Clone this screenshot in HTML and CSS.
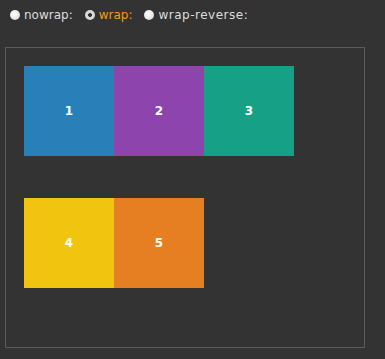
FILE: index.html
```html
<!DOCTYPE html>
<html>
<head>
<meta charset="utf-8">
<link rel="stylesheet" href="styles.css">
</head>
<body>
<div class="controls">
  <label class="opt"><span class="radio"></span><span class="lbl">nowrap:</span></label>
  <label class="opt"><span class="radio checked"></span><span class="lbl active">wrap:</span></label>
  <label class="opt"><span class="radio"></span><span class="lbl wide">wrap-reverse:</span></label>
</div>
<div class="frame">
  <div class="item c1">1</div>
  <div class="item c2">2</div>
  <div class="item c3">3</div>
  <div class="item c4">4</div>
  <div class="item c5">5</div>
</div>
</body>
</html>
```
FILE: styles.css
```css
html, body {
  margin: 0;
  padding: 0;
  background: #333333;
}
body {
  font-family: "DejaVu Sans", Verdana, sans-serif;
  font-size: 12px;
  color: #dddddd;
}
.controls {
  display: flex;
  align-items: center;
  height: 30px;
  padding-left: 10px;
  gap: 12px;
}
.opt {
  display: flex;
  align-items: center;
  gap: 4px;
}
.radio {
  width: 10px;
  height: 10px;
  border-radius: 50%;
  background: radial-gradient(circle at 40% 40%, #ffffff 0%, #e8e8e8 55%, #bdbdbd 100%);
  box-sizing: border-box;
}
.radio.checked {
  background: radial-gradient(circle, #333 0 1.6px, #d8d8d8 2.2px 100%);
}
.lbl {
  font-weight: 500;
}
.lbl.active {
  color: #f39c12;
}
.lbl.wide {
  letter-spacing: 0.5px;
}
.frame {
  margin: 17px 0 0 5px;
  width: 360px;
  height: 301px;
  box-sizing: border-box;
  border: 1px solid #5b5b5b;
  padding: 18px;
  display: flex;
  flex-wrap: wrap;
  align-items: flex-start;
}
.item {
  width: 90px;
  height: 90px;
  display: flex;
  align-items: center;
  justify-content: center;
  color: #ffffff;
  font-weight: bold;
  font-size: 12px;
}
.c1 { background: #2980b9; }
.c2 { background: #8e44ad; }
.c3 { background: #16a085; }
.c4 { background: #f1c40f; }
.c5 { background: #e67e22; }
```
